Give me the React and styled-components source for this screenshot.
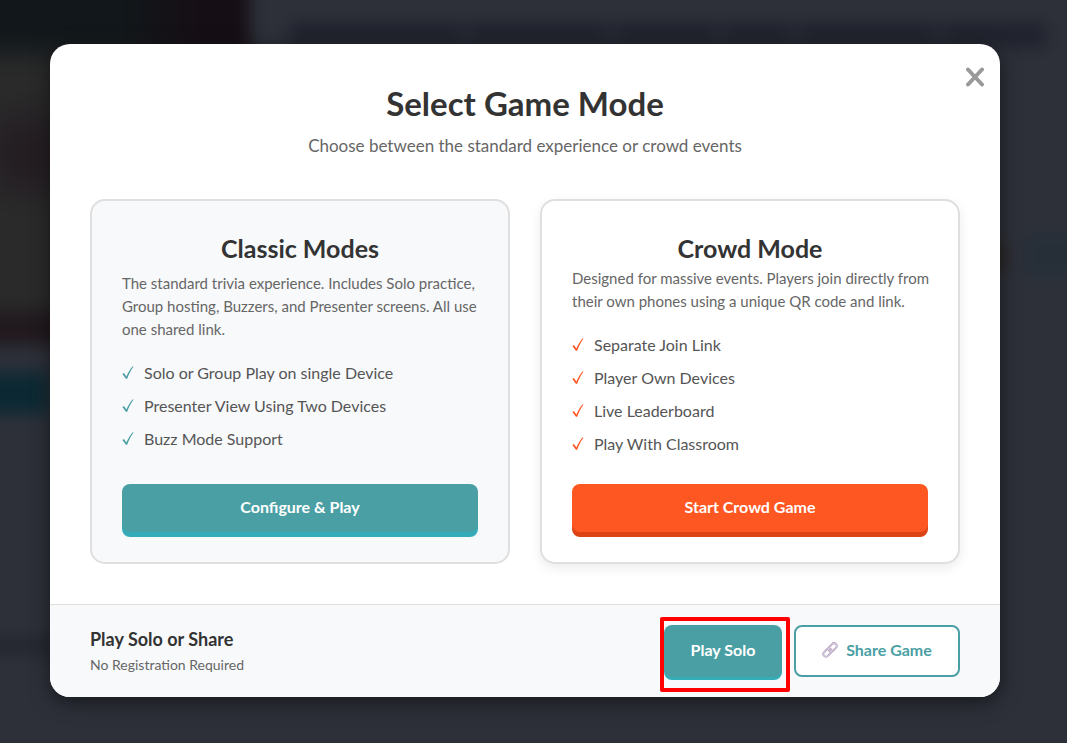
import styled, { createGlobalStyle, ThemeProvider } from "styled-components";

const theme = {
  teal: "#4a9fa5",
  tealDark: "#35adb9",
  orange: "#ff5722",
  orangeDark: "#dc4416",
  white: "#ffffff",
  surface: "#f8f9fb",
  border: "#dfdfdf",
  heading: "#333333",
  text: "#555555",
  muted: "#666666",
};

const classicFeatures = [
  "Solo or Group Play on single Device",
  "Presenter View Using Two Devices",
  "Buzz Mode Support",
];

const crowdFeatures = [
  "Separate Join Link",
  "Player Own Devices",
  "Live Leaderboard",
  "Play With Classroom",
];

const CheckIcon = () => (
  <CheckSvg viewBox="0 0 12 14" aria-hidden="true">
    <path d="M0.4 8 L1.9 7.1 L4.4 10.6 C6.2 6.4 8.2 3 10.5 0.5 L11.6 0.5 C8.8 4.3 7 8 5.2 12.7 L3.9 12.7 Z" />
  </CheckSvg>
);

const LinkIcon = () => (
  <LinkSvg viewBox="0 0 24 24" aria-hidden="true">
    <g transform="rotate(-45 12 12)">
      <rect x="-0.5" y="8" width="14" height="8" rx="4" />
      <rect x="10.5" y="8" width="14" height="8" rx="4" />
      <rect className="shine" x="-0.5" y="8" width="14" height="8" rx="4" />
      <rect className="shine" x="10.5" y="8" width="14" height="8" rx="4" />
    </g>
  </LinkSvg>
);

const CloseIcon = () => (
  <CloseSvg viewBox="0 0 20 20" aria-hidden="true">
    <path d="M3 2.5 L17 17.5 M17 2.5 L3 17.5" />
  </CloseSvg>
);

const FeatureList = ({ items, accent }) => (
  <Features>
    {items.map((item) => (
      <Feature key={item} $accent={accent}>
        <CheckIcon />
        {item}
      </Feature>
    ))}
  </Features>
);

const App = () => {
  return (
    <ThemeProvider theme={theme}>
      <GlobalStyle />
      <Overlay>
        <Backdrop aria-hidden="true">
          <Cover />
          <TitleBar>
            <TitleWord $grow={5} />
            <TitleWord $grow={4} />
            <TitleWord $grow={3} />
            <TitleWord $grow={2} />
            <TitleWord $grow={4} />
            <TitleWord $grow={3} />
          </TitleBar>
        </Backdrop>

        <Modal role="dialog" aria-labelledby="mode-title">
          <CloseButton type="button" aria-label="Close">
            <CloseIcon />
          </CloseButton>

          <Body>
            <Header>
              <Title id="mode-title">Select Game Mode</Title>
              <Subtitle>
                Choose between the standard experience or crowd events
              </Subtitle>
            </Header>

            <Cards>
              <Card $tinted>
                <CardTitle $spaced>Classic Modes</CardTitle>
                <Description>
                  The standard trivia experience. Includes Solo practice, Group
                  hosting, Buzzers, and Presenter screens. All use one shared
                  link.
                </Description>
                <FeatureList items={classicFeatures} accent="teal" />
                <ActionButton type="button">Configure &amp; Play</ActionButton>
              </Card>

              <Card>
                <CardTitle>Crowd Mode</CardTitle>
                <Description>
                  Designed for massive events. Players join directly from their
                  own phones using a unique QR code and link.
                </Description>
                <FeatureList items={crowdFeatures} accent="orange" />
                <ActionButton type="button" $crowd>
                  Start Crowd Game
                </ActionButton>
              </Card>
            </Cards>
          </Body>

          <Footer>
            <div>
              <FooterTitle>Play Solo or Share</FooterTitle>
              <FooterNote>No Registration Required</FooterNote>
            </div>
            <FooterActions>
              <Highlighted>
                <SoloButton type="button">Play Solo</SoloButton>
              </Highlighted>
              <ShareButton type="button">
                <LinkIcon />
                Share Game
              </ShareButton>
            </FooterActions>
          </Footer>
        </Modal>
      </Overlay>
    </ThemeProvider>
  );
};

const GlobalStyle = createGlobalStyle`
  *, *::before, *::after {
    box-sizing: border-box;
  }

  body {
    margin: 0;
    background: #2d3039;
    font-family: Lato, "Open Sans", sans-serif;
  }

  h2, h3, h4, p, ul {
    margin: 0;
    padding: 0;
  }

  button {
    font-family: inherit;
    cursor: pointer;
  }
`;

const Overlay = styled.div`
  position: relative;
  display: flex;
  align-items: center;
  min-height: 100vh;
  padding: 44px 67px 46px 50px;
  overflow: hidden;
`;

// Bleeds past the edges so the blur does not fade out at the window border
const Backdrop = styled.div`
  position: absolute;
  inset: -30px;
  display: flex;
  align-items: flex-start;
  gap: 40px;
  padding-right: 50px;
  background:
    linear-gradient(#0c2933, #0c2933) 0 402px / 78px 42px no-repeat,
    linear-gradient(#23262e, #23262e) 0 668px / 300px 16px no-repeat,
    linear-gradient(#2a2520, #2a2520) right 92px top 274px / 50px 26px no-repeat,
    linear-gradient(#262f38, #262f38) right 0 top 264px / 74px 42px no-repeat,
    #2d3039;
  filter: blur(8px);
`;

const Cover = styled.div`
  flex: 0 0 280px;
  height: 374px;
  background:
    radial-gradient(circle at 60px 184px, #241e23 0 20px, transparent 60px),
    linear-gradient(90deg, transparent 150px, #160e15 230px) 0 0 / 100% 80px
      no-repeat,
    linear-gradient(#11171a 0 66px, #2a2a2a 100px 334px, #20181d 350px);
`;

const TitleBar = styled.div`
  display: flex;
  flex: 1;
  gap: 5px;
  padding-top: 52px;
`;

const TitleWord = styled.div`
  flex: ${({ $grow }) => $grow} 1 0;
  height: 26px;
  background: #20232d;
`;

const Modal = styled.div`
  position: relative;
  width: 100%;
  background: ${({ theme }) => theme.white};
  border-radius: 20px;
  box-shadow: 0 5px 20px rgba(0, 0, 0, 0.5);
`;

const CloseButton = styled.button`
  position: absolute;
  top: 21px;
  right: 13px;
  display: flex;
  padding: 2px;
  border: 0;
  background: none;
`;

const CloseSvg = styled.svg`
  width: 20px;
  height: 20px;
  fill: none;
  stroke: #999999;
  stroke-width: 4;
  stroke-linecap: round;
`;

const Body = styled.div`
  padding: 40px;
`;

const Header = styled.header`
  margin-bottom: 41px;
  text-align: center;
`;

const Title = styled.h2`
  margin-bottom: 12px;
  color: ${({ theme }) => theme.heading};
  font-size: 33px;
  font-weight: 700;
  line-height: 38px;
`;

const Subtitle = styled.p`
  color: ${({ theme }) => theme.muted};
  font-size: 17px;
  line-height: 24px;
`;

const Cards = styled.div`
  display: grid;
  grid-template-columns: 1fr 1fr;
  gap: 30px;
`;

const Card = styled.section`
  display: flex;
  flex-direction: column;
  padding: 30px;
  background: ${({ theme, $tinted }) => ($tinted ? theme.surface : theme.white)};
  border: 2px solid ${({ theme }) => theme.border};
  border-radius: 15px;
  box-shadow: ${({ $tinted }) =>
    $tinted ? "none" : "0 4px 12px rgba(0, 0, 0, 0.08)"};
`;

const CardTitle = styled.h3`
  margin-bottom: ${({ $spaced }) => ($spaced ? "7px" : "2px")};
  color: ${({ theme }) => theme.heading};
  font-size: 25px;
  font-weight: 700;
  line-height: 34px;
  text-align: center;
`;

const Description = styled.p`
  margin: 0 -8px 20px 0;
  color: ${({ theme }) => theme.muted};
  font-size: 15px;
  line-height: 23px;
`;

const Features = styled.ul`
  display: flex;
  flex: 1;
  flex-direction: column;
  gap: 10px;
  margin-bottom: 29px;
  list-style: none;
`;

const Feature = styled.li`
  display: flex;
  align-items: center;
  gap: 10px;
  color: ${({ theme }) => theme.text};
  font-size: 16px;
  line-height: 23px;

  svg {
    fill: ${({ theme, $accent }) => theme[$accent]};
  }
`;

const CheckSvg = styled.svg`
  width: 12px;
  height: 14px;
`;

const ActionButton = styled.button`
  height: 48px;
  padding: 0 20px 3px;
  border: 0;
  border-radius: 8px;
  background: ${({ theme, $crowd }) => ($crowd ? theme.orange : theme.teal)};
  box-shadow: 0 5px 0
    ${({ theme, $crowd }) => ($crowd ? theme.orangeDark : theme.tealDark)};
  color: ${({ theme }) => theme.white};
  font-size: 16px;
  font-weight: 700;
`;

const Footer = styled.footer`
  display: flex;
  align-items: center;
  justify-content: space-between;
  padding: 20px 40px;
  background: ${({ theme }) => theme.surface};
  border-top: 1px solid ${({ theme }) => theme.border};
  border-radius: 0 0 20px 20px;
`;

const FooterTitle = styled.h4`
  color: ${({ theme }) => theme.heading};
  font-size: 18px;
  font-weight: 700;
  line-height: 28px;
`;

const FooterNote = styled.p`
  color: ${({ theme }) => theme.muted};
  font-size: 14px;
  line-height: 24px;
`;

const FooterActions = styled.div`
  display: flex;
  gap: 12px;
`;

const Highlighted = styled.div`
  position: relative;

  &::after {
    content: "";
    position: absolute;
    inset: -8px -8px -15px -4px;
    border: 4px solid #ff0000;
    border-radius: 2px;
    pointer-events: none;
  }
`;

const FooterButton = styled.button`
  display: flex;
  align-items: center;
  justify-content: center;
  height: 52px;
  padding: 0 20px 3px;
  border-radius: 8px;
  font-size: 16px;
  font-weight: 700;
`;

const SoloButton = styled(FooterButton)`
  min-width: 118px;
  border: 0;
  background: ${({ theme }) => theme.teal};
  box-shadow: 0 3px 0 ${({ theme }) => theme.tealDark};
  color: ${({ theme }) => theme.white};
`;

const ShareButton = styled(FooterButton)`
  min-width: 166px;
  gap: 8px;
  border: 2px solid ${({ theme }) => theme.teal};
  background: ${({ theme }) => theme.white};
  color: ${({ theme }) => theme.teal};
`;

const LinkSvg = styled.svg`
  width: 16px;
  height: 16px;
  fill: none;
  stroke: #b5a3c2;
  stroke-width: 3;

  .shine {
    stroke: #e2dae6;
    stroke-width: 1;
  }
`;

export default App;
